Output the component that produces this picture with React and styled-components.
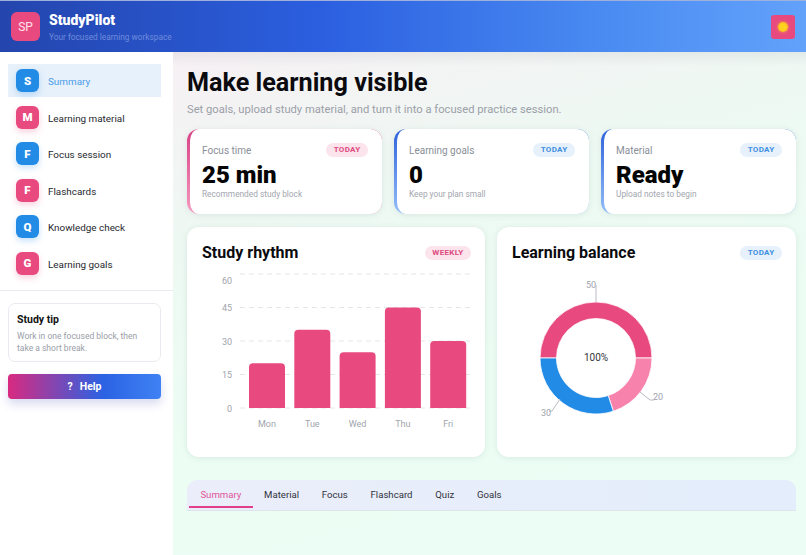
import React from "react";
import styled, {createGlobalStyle} from "styled-components";

const GlobalStyle = createGlobalStyle`
  html, body {
    margin: 0;
    height: 100%;
    overflow: hidden;
    font-family: Roboto, "Noto Sans", sans-serif;
    background: #ffffff;
  }
  * { box-sizing: border-box; }
`;

const PINK = "#e84a80";
const BLUE = "#228be6";

const Page = styled.div`
  display: flex;
  flex-direction: column;
  height: 555px;
`;

const Header = styled.header`
  flex: 0 0 52px;
  display: flex;
  align-items: center;
  justify-content: space-between;
  padding: 0 11px;
  border-top: 1px solid #9fb0dc;
  background: linear-gradient(90deg, #2445ad 0%, #2b5fe0 40%, #4a8bf2 75%, #62a2fb 100%);
`;

const Brand = styled.div`
  display: flex;
  align-items: center;
  gap: 9px;
`;

const Logo = styled.div`
  width: 29px;
  height: 29px;
  border-radius: 6px;
  background: ${PINK};
  color: #ffe3ec;
  font-size: 12px;
  display: flex;
  align-items: center;
  justify-content: center;
`;

const BrandText = styled.div`
  display: flex;
  flex-direction: column;
  padding-top: 2px;
`;

const BrandName = styled.div`
  color: #fff;
  font-size: 14px;
  font-weight: 900;
  line-height: 17px;
`;

const BrandSub = styled.div`
  color: #6f8cdc;
  font-size: 8.3px;
  line-height: 14px;
  margin-top: 1px;
`;

const Avatar = styled.div`
  width: 24px;
  height: 24px;
  border-radius: 3px;
  background: ${PINK};
  display: flex;
  align-items: center;
  justify-content: center;
`;

const Sun = styled.div`
  width: 10px;
  height: 10px;
  border-radius: 50%;
  background: radial-gradient(circle, #ffd21f 40%, #f9a825 100%);
  box-shadow: 0 0 3px #f9b233;
`;

const Body = styled.div`
  flex: 1;
  display: flex;
  min-height: 0;
`;

const Sidebar = styled.aside`
  flex: 0 0 173px;
  background: #fff;
  display: flex;
  flex-direction: column;
`;

const Nav = styled.nav`
  display: flex;
  flex-direction: column;
  gap: 3.5px;
  padding: 12px 12px 10px 8px;
  border-bottom: 1px solid #e8ebf0;
`;

const NavItem = styled.div`
  height: 33px;
  display: flex;
  align-items: center;
  gap: 9px;
  padding-left: 8px;
  font-size: 9.9px;
  color: ${(p) => (p.$active ? "#4a9be8" : "#26282e")};
  background: ${(p) => (p.$active ? "#e7f1fb" : "transparent")};
`;

const NavLabel = styled.span`
  padding-top: 2px;
`;

const NavIcon = styled.div`
  width: 23px;
  height: 23px;
  border-radius: 6px;
  color: #fff;
  font-size: 11.5px;
  font-weight: 900;
  display: flex;
  align-items: center;
  justify-content: center;
  background: ${(p) => (p.$tone === "blue" ? BLUE : PINK)};
  box-shadow: 0 3px 6px ${(p) => (p.$tone === "blue" ? "rgba(34,139,230,.25)" : "rgba(232,74,128,.25)")};
`;

const SideBottom = styled.div`
  padding: 12px 12px 0 8px;
  display: flex;
  flex-direction: column;
  gap: 12px;
`;

const TipCard = styled.div`
  height: 59px;
  border: 1px solid #e8ebf0;
  border-radius: 7px;
  padding: 9px 8px;
`;

const TipTitle = styled.div`
  font-size: 10.5px;
  font-weight: 700;
  color: #111;
  line-height: 14px;
`;

const TipText = styled.div`
  font-size: 8.5px;
  color: #9a9ea8;
  line-height: 12px;
  margin-top: 3px;
`;

const HelpButton = styled.button`
  height: 25px;
  border: 0;
  border-radius: 4px;
  color: #fff;
  font-family: inherit;
  font-size: 10.5px;
  font-weight: 700;
  background: linear-gradient(90deg, #d92a80 0%, #2b62e3 62%, #3f82f4 100%);
  box-shadow: 0 5px 10px rgba(60, 70, 180, .2);
  display: flex;
  align-items: center;
  justify-content: center;
  gap: 7px;
`;

const Main = styled.main`
  flex: 1;
  min-width: 0;
  padding: 14px 10px 0 14px;
  background:
    linear-gradient(180deg, rgba(110, 120, 130, .1), transparent 14px),
    linear-gradient(165deg, #f7f0f4 0%, #eef8f3 28%, #ecfdf4 60%, #ecfdf5 100%);
`;

const Title = styled.h1`
  margin: 0;
  font-size: 25.2px;
  line-height: 34px;
  font-weight: 700;
  color: #0b0b0f;
`;

const Subtitle = styled.p`
  margin: 2px 0 0;
  font-size: 11.2px;
  line-height: 16px;
  color: #9ba0a8;
`;

const StatGrid = styled.div`
  display: grid;
  grid-template-columns: repeat(3, 1fr);
  gap: 12px;
  margin-top: 11px;
`;

const StatCard = styled.div`
  height: 85px;
  padding: 14px 14px 0 12px;
  border-style: solid;
  border-color: transparent;
  border-width: 0 0 0 3px;
  border-radius: 12px;
  background:
    linear-gradient(#fff, #fff) padding-box,
    linear-gradient(180deg, ${(p) => (p.$tone === "blue" ? "#2f62dc, #93bdf8" : "#d93f85, #f59abf")}) border-box;
  box-shadow: 0 1px 6px rgba(40, 90, 70, .1);
`;

const CardTop = styled.div`
  display: flex;
  align-items: center;
  justify-content: space-between;
`;

const StatLabel = styled.div`
  font-size: 10px;
  color: #8a8f98;
`;

const Chip = styled.span`
  height: 14px;
  padding: 0 7.5px;
  border-radius: 7px;
  font-size: 8px;
  font-weight: 700;
  letter-spacing: .3px;
  line-height: 14px;
  color: ${(p) => (p.$tone === "blue" ? "#3f8fe0" : "#dd4a80")};
  background: ${(p) => (p.$tone === "blue" ? "#e7f1fb" : "#fce4ec")};
`;

const StatValue = styled.div`
  font-size: 24px;
  font-weight: 900;
  color: #050505;
  line-height: 28px;
  margin-top: 4px;
`;

const StatNote = styled.div`
  font-size: 8.3px;
  color: #a2a6ae;
  line-height: 11px;
`;

const ChartGrid = styled.div`
  display: grid;
  grid-template-columns: 298px 299px;
  gap: 12px;
  margin-top: 13px;
`;

const ChartCard = styled.section`
  height: 230px;
  border-radius: 12px;
  background: #fff;
  box-shadow: 0 1px 6px rgba(40, 90, 70, .1);
  padding: 16px 14px 0 15px;
`;

const ChartTitle = styled.h2`
  margin: 0;
  font-size: 16px;
  line-height: 20px;
  font-weight: 700;
  color: #0b0b0f;
`;

const ChartSvg = styled.svg`
  display: block;
  margin: 9px 0 0 -15px;
  font-family: Roboto, sans-serif;
`;

const TabBar = styled.div`
  display: flex;
  height: 31px;
  margin-top: 23px;
  padding: 0 2px;
  border-radius: 10px 10px 0 0;
  border-bottom: 1px solid #dfe4ea;
  background: linear-gradient(90deg, #ebeefa, #e3edfb);
`;

const Tab = styled.div`
  display: flex;
  align-items: center;
  padding: 3px 11.4px 0;
  height: 28px;
  font-size: 9.6px;
  color: ${(p) => (p.$active ? "#e0559a" : "#30333a")};
  border-bottom: 2px solid ${(p) => (p.$active ? "#e0408a" : "transparent")};
`;

const navItems = [
    {letter: "S", label: "Summary", tone: "blue", active: true},
    {letter: "M", label: "Learning material", tone: "pink"},
    {letter: "F", label: "Focus session", tone: "blue"},
    {letter: "F", label: "Flashcards", tone: "pink"},
    {letter: "Q", label: "Knowledge check", tone: "blue"},
    {letter: "G", label: "Learning goals", tone: "pink"}
];

const stats = [
    {label: "Focus time", value: "25 min", note: "Recommended study block", tone: "pink"},
    {label: "Learning goals", value: "0", note: "Keep your plan small", tone: "blue"},
    {label: "Material", value: "Ready", note: "Upload notes to begin", tone: "blue"}
];

const bars = [
    {day: "Mon", value: 20},
    {day: "Tue", value: 35},
    {day: "Wed", value: 25},
    {day: "Thu", value: 45},
    {day: "Fri", value: 30}
];

const tabs = ["Summary", "Material", "Focus", "Flashcard", "Quiz", "Goals"];

const BarChart = () => {
    const zeroY = 136;
    const scale = 134 / 60;
    const ticks = [
        {value: 60, labelY: 12},
        {value: 45, labelY: 39},
        {value: 30, labelY: 73},
        {value: 15, labelY: 106},
        {value: 0, labelY: 140}
    ];
    return (
        <ChartSvg width="298" height="170" viewBox="0 0 298 170">
            {ticks.map((t) => (
                <g key={t.value}>
                    <line
                        x1="53"
                        x2="285"
                        y1={zeroY - t.value * scale}
                        y2={zeroY - t.value * scale}
                        stroke="#e4e6ea"
                        strokeDasharray="5 4"
                    />
                    <text x="45" y={t.labelY} textAnchor="end" fontSize="9" fill="#a0a4ac">
                        {t.value}
                    </text>
                </g>
            ))}
            {bars.map((b, i) => {
                const x = 62 + i * 45.3;
                const h = b.value * scale;
                return (
                    <g key={b.day}>
                        <path
                            d={`M${x} ${zeroY}V${zeroY - h + 4}q0 -4 4 -4H${x + 32}q4 0 4 4V${zeroY}Z`}
                            fill={PINK}
                        />
                        <text x={x + 18} y={zeroY + 19} textAnchor="middle" fontSize="9" fill="#a0a4ac">
                            {b.day}
                        </text>
                    </g>
                );
            })}
        </ChartSvg>
    );
};

const polar = (cx, cy, r, deg) => {
    const a = (deg * Math.PI) / 180;
    return [cx + r * Math.cos(a), cy + r * Math.sin(a)];
};

const arcPath = (cx, cy, rOut, rIn, from, to) => {
    const [x1, y1] = polar(cx, cy, rOut, from);
    const [x2, y2] = polar(cx, cy, rOut, to);
    const [x3, y3] = polar(cx, cy, rIn, to);
    const [x4, y4] = polar(cx, cy, rIn, from);
    const large = to - from > 180 ? 1 : 0;
    return `M${x1} ${y1}A${rOut} ${rOut} 0 ${large} 1 ${x2} ${y2}L${x3} ${y3}A${rIn} ${rIn} 0 ${large} 0 ${x4} ${y4}Z`;
};

const slices = [
    {from: 180, to: 360, color: PINK},
    {from: 0, to: 72, color: "#f783ac"},
    {from: 72, to: 180, color: BLUE}
];

const DonutChart = () => {
    const cx = 99;
    const cy = 86;
    return (
        <ChartSvg width="299" height="170" viewBox="0 0 299 170">
            {slices.map((s) => (
                <path
                    key={s.from}
                    d={arcPath(cx, cy, 56, 39.5, s.from, s.to)}
                    fill={s.color}
                    stroke="#fff"
                    strokeWidth="0.8"
                />
            ))}
            <path d="M99 30V13" stroke="#b9bcc2" fill="none" />
            <path d="M143 120L153 128H157" stroke="#b9bcc2" fill="none" />
            <path d="M63 127L55 139H52" stroke="#b9bcc2" fill="none" />
            <text x="94" y="16" textAnchor="middle" fontSize="9" fill="#a0a4ac">50</text>
            <text x="161" y="128" textAnchor="middle" fontSize="9" fill="#a0a4ac">20</text>
            <text x="49" y="144" textAnchor="middle" fontSize="9" fill="#a0a4ac">30</text>
            <text x={cx} y={cy + 3} textAnchor="middle" fontSize="10" fill="#33363c">100%</text>
        </ChartSvg>
    );
};

const App = () => (
    <Page>
        <GlobalStyle />
        <Header>
            <Brand>
                <Logo>SP</Logo>
                <BrandText>
                    <BrandName>StudyPilot</BrandName>
                    <BrandSub>Your focused learning workspace</BrandSub>
                </BrandText>
            </Brand>
            <Avatar>
                <Sun />
            </Avatar>
        </Header>
        <Body>
            <Sidebar>
                <Nav>
                    {navItems.map((item) => (
                        <NavItem key={item.label} $active={item.active}>
                            <NavIcon $tone={item.tone}>{item.letter}</NavIcon>
                            <NavLabel>{item.label}</NavLabel>
                        </NavItem>
                    ))}
                </Nav>
                <SideBottom>
                    <TipCard>
                        <TipTitle>Study tip</TipTitle>
                        <TipText>Work in one focused block, then take a short break.</TipText>
                    </TipCard>
                    <HelpButton>
                        <span>?</span>
                        <span>Help</span>
                    </HelpButton>
                </SideBottom>
            </Sidebar>
            <Main>
                <Title>Make learning visible</Title>
                <Subtitle>Set goals, upload study material, and turn it into a focused practice session.</Subtitle>
                <StatGrid>
                    {stats.map((s) => (
                        <StatCard key={s.label} $tone={s.tone}>
                            <CardTop>
                                <StatLabel>{s.label}</StatLabel>
                                <Chip $tone={s.tone}>TODAY</Chip>
                            </CardTop>
                            <StatValue>{s.value}</StatValue>
                            <StatNote>{s.note}</StatNote>
                        </StatCard>
                    ))}
                </StatGrid>
                <ChartGrid>
                    <ChartCard>
                        <CardTop>
                            <ChartTitle>Study rhythm</ChartTitle>
                            <Chip $tone="pink">WEEKLY</Chip>
                        </CardTop>
                        <BarChart />
                    </ChartCard>
                    <ChartCard>
                        <CardTop>
                            <ChartTitle>Learning balance</ChartTitle>
                            <Chip $tone="blue">TODAY</Chip>
                        </CardTop>
                        <DonutChart />
                    </ChartCard>
                </ChartGrid>
                <TabBar>
                    {tabs.map((t, i) => (
                        <Tab key={t} $active={i === 0}>{t}</Tab>
                    ))}
                </TabBar>
            </Main>
        </Body>
    </Page>
);

export default App;
